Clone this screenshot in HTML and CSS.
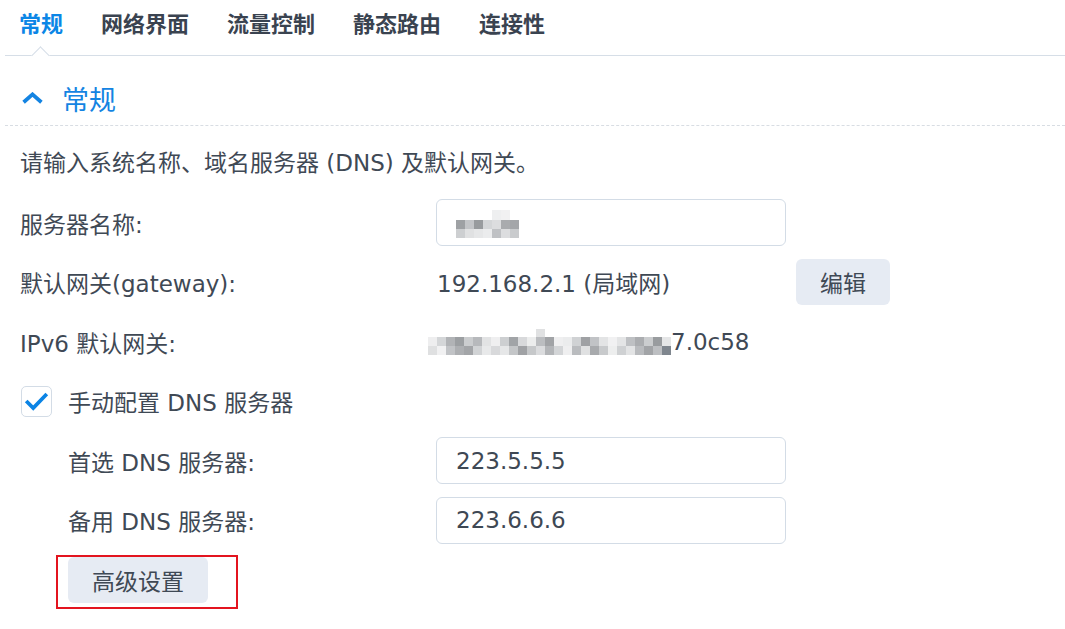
FILE: index.html
```html
<!DOCTYPE html>
<html lang="zh-CN">
<head>
<meta charset="utf-8">
<title>常规</title>
<link rel="stylesheet" href="styles.css">
</head>
<body>
<div class="page">
  <nav class="tabs">
    <span class="tab active">常规</span>
    <span class="tab">网络界面</span>
    <span class="tab">流量控制</span>
    <span class="tab">静态路由</span>
    <span class="tab">连接性</span>
  </nav>

  <section class="panel">
    <div class="section-head">
      <svg class="chevron" width="21" height="12" viewBox="0 0 21 12"><polyline points="1.6,10.2 10.5,2.4 19.4,10.2" fill="none" stroke="#1484e2" stroke-width="3.8"/></svg>
      <span class="section-title">常规</span>
    </div>

    <div class="content">
      <p class="desc">请输入系统名称、域名服务器 (DNS) 及默认网关。</p>

      <div class="form">
        <div class="row">
          <span class="label">服务器名称:</span>
          <div class="field">
            <div class="input">
              <svg class="mosaic" width="76" height="28" viewBox="0 0 76 28">
                <rect x="36" y="0" width="9" height="10" fill="#eeeff0"/>
                <rect x="45" y="0" width="9" height="10" fill="#f1f1f2"/>
                <rect x="0" y="10" width="9" height="9" fill="#9ea1a4"/>
                <rect x="9" y="10" width="9" height="9" fill="#c3c5c8"/>
                <rect x="18" y="10" width="9" height="9" fill="#989b9e"/>
                <rect x="27" y="10" width="9" height="9" fill="#d4d6d8"/>
                <rect x="36" y="10" width="9" height="9" fill="#dcdddf"/>
                <rect x="45" y="10" width="9" height="9" fill="#a9abae"/>
                <rect x="54" y="10" width="9" height="9" fill="#a4a6a9"/>
                <rect x="0" y="19" width="9" height="9" fill="#cdcfd1"/>
                <rect x="9" y="19" width="9" height="9" fill="#e0e1e2"/>
                <rect x="18" y="19" width="9" height="9" fill="#e6e7e8"/>
                <rect x="27" y="19" width="9" height="9" fill="#ebeced"/>
                <rect x="36" y="19" width="9" height="9" fill="#bfc1c4"/>
                <rect x="45" y="19" width="9" height="9" fill="#dcdddf"/>
                <rect x="54" y="19" width="9" height="9" fill="#c9cbcd"/>
              </svg>
            </div>
          </div>
        </div>

        <div class="row">
          <span class="label">默认网关(gateway):</span>
          <div class="field">
            <span class="value">192.168.2.1 (局域网)</span>
            <button class="btn">编辑</button>
          </div>
        </div>

        <div class="row">
          <span class="label">IPv6 默认网关:</span>
          <div class="field ipv6">
            <svg class="mosaic-wide" width="252" height="28" viewBox="0 0 252 28">
              <rect x="108" y="0" width="9" height="8" fill="#e0e1e2"/>
              <rect x="0" y="8" width="9" height="9" fill="#eeeeef"/>
              <rect x="9" y="8" width="9" height="9" fill="#d4d6d8"/>
              <rect x="18" y="8" width="9" height="9" fill="#b1b3b6"/>
              <rect x="27" y="8" width="9" height="9" fill="#9c9fa2"/>
              <rect x="36" y="8" width="9" height="9" fill="#cbcdcf"/>
              <rect x="45" y="8" width="9" height="9" fill="#b7b9bc"/>
              <rect x="54" y="8" width="9" height="9" fill="#e2e3e4"/>
              <rect x="63" y="8" width="9" height="9" fill="#efeff0"/>
              <rect x="72" y="8" width="9" height="9" fill="#cdcfd1"/>
              <rect x="81" y="8" width="9" height="9" fill="#a1a4a7"/>
              <rect x="90" y="8" width="9" height="9" fill="#d8d9db"/>
              <rect x="99" y="8" width="9" height="9" fill="#eceded"/>
              <rect x="108" y="8" width="9" height="9" fill="#bbbdc0"/>
              <rect x="117" y="8" width="9" height="9" fill="#a1a3a6"/>
              <rect x="126" y="8" width="9" height="9" fill="#efeff0"/>
              <rect x="135" y="8" width="9" height="9" fill="#ebeced"/>
              <rect x="144" y="8" width="9" height="9" fill="#d0d2d4"/>
              <rect x="153" y="8" width="9" height="9" fill="#9fa1a4"/>
              <rect x="162" y="8" width="9" height="9" fill="#c1c3c6"/>
              <rect x="171" y="8" width="9" height="9" fill="#e3e4e5"/>
              <rect x="180" y="8" width="9" height="9" fill="#f1f1f2"/>
              <rect x="189" y="8" width="9" height="9" fill="#e4e5e6"/>
              <rect x="198" y="8" width="9" height="9" fill="#bec0c3"/>
              <rect x="207" y="8" width="9" height="9" fill="#abadb0"/>
              <rect x="216" y="8" width="9" height="9" fill="#cbcdcf"/>
              <rect x="225" y="8" width="9" height="9" fill="#999c9f"/>
              <rect x="234" y="8" width="9" height="9" fill="#e5e6e7"/>
              <rect x="0" y="17" width="9" height="9" fill="#dfe0e1"/>
              <rect x="9" y="17" width="9" height="9" fill="#f1f1f2"/>
              <rect x="18" y="17" width="9" height="9" fill="#c1c3c6"/>
              <rect x="27" y="17" width="9" height="9" fill="#adafb2"/>
              <rect x="36" y="17" width="9" height="9" fill="#a3a5a8"/>
              <rect x="45" y="17" width="9" height="9" fill="#d1d3d5"/>
              <rect x="54" y="17" width="9" height="9" fill="#e8e9ea"/>
              <rect x="63" y="17" width="9" height="9" fill="#d8d9db"/>
              <rect x="72" y="17" width="9" height="9" fill="#e6e7e8"/>
              <rect x="81" y="17" width="9" height="9" fill="#c4c6c8"/>
              <rect x="90" y="17" width="9" height="9" fill="#a0a2a5"/>
              <rect x="99" y="17" width="9" height="9" fill="#c6c8ca"/>
              <rect x="108" y="17" width="9" height="9" fill="#dbdcde"/>
              <rect x="117" y="17" width="9" height="9" fill="#b3b5b8"/>
              <rect x="126" y="17" width="9" height="9" fill="#d3d5d7"/>
              <rect x="135" y="17" width="9" height="9" fill="#efeff0"/>
              <rect x="144" y="17" width="9" height="9" fill="#babcbf"/>
              <rect x="153" y="17" width="9" height="9" fill="#e0e1e2"/>
              <rect x="162" y="17" width="9" height="9" fill="#a8aaad"/>
              <rect x="171" y="17" width="9" height="9" fill="#c8cacc"/>
              <rect x="180" y="17" width="9" height="9" fill="#edeeee"/>
              <rect x="189" y="17" width="9" height="9" fill="#cfd1d3"/>
              <rect x="198" y="17" width="9" height="9" fill="#e3e4e5"/>
              <rect x="207" y="17" width="9" height="9" fill="#b9bbbe"/>
              <rect x="216" y="17" width="9" height="9" fill="#a2a4a7"/>
              <rect x="225" y="17" width="9" height="9" fill="#bdbfc2"/>
              <rect x="234" y="17" width="9" height="9" fill="#7f868e"/>
            </svg><span class="value tail">7.0c58</span>
          </div>
        </div>

        <div class="row">
          <label class="check-label">
            <span class="checkbox">
              <svg width="31" height="31" viewBox="0 0 31 31"><polyline points="4.5,15 12,22.5 26.5,7.5" fill="none" stroke="#0b84e5" stroke-width="4"/></svg>
            </span>
            <span>手动配置 DNS 服务器</span>
          </label>
        </div>

        <div class="row">
          <span class="label sub">首选 DNS 服务器:</span>
          <div class="field">
            <div class="input">223.5.5.5</div>
          </div>
        </div>

        <div class="row">
          <span class="label sub">备用 DNS 服务器:</span>
          <div class="field">
            <div class="input">223.6.6.6</div>
          </div>
        </div>

        <div class="row">
          <div class="highlight">
            <button class="btn">高级设置</button>
          </div>
        </div>
      </div>
    </div>
  </section>
</div>
</body>
</html>
```

FILE: styles.css
```css
html, body {
  margin: 0;
  padding: 0;
  background: #ffffff;
}

body {
  font-family: "DejaVu Sans", "Noto Sans CJK SC", sans-serif;
  font-size: 23px;
  color: #3f4955;
  overflow: hidden;
}

.page {
  margin-left: 5px;
  width: 1060px;
}

/* Tabs */
.tabs {
  display: flex;
  gap: 38px;
  padding-left: 14px;
  height: 55px;
  border-bottom: 1px solid #d6dee7;
  box-sizing: content-box;
}

.tab {
  position: relative;
  font-family: "Noto Sans CJK SC", sans-serif;
  font-weight: 700;
  font-size: 22px;
  line-height: 44px;
  color: #3a4350;
}

.tab.active {
  color: #0b86e6;
}

.tab.active::after {
  content: "";
  position: absolute;
  left: 50%;
  bottom: -7px;
  width: 12px;
  height: 12px;
  margin-left: -7px;
  background: #ffffff;
  border-top: 1px solid #d6dee7;
  border-left: 1px solid #d6dee7;
  transform: rotate(45deg);
}

/* Section header */
.section-head {
  display: flex;
  align-items: center;
  gap: 19px;
  padding-left: 17px;
  padding-top: 17px;
  height: 52px;
  border-bottom: 1px dashed #d8dde3;
}

.chevron {
  display: block;
  margin-top: -2px;
}

.section-title {
  font-family: "Noto Sans CJK SC", sans-serif;
  font-size: 27px;
  line-height: 52px;
  color: #1484e2;
}

/* Content */
.content {
  padding-left: 15px;
}

.desc {
  margin: 0;
  padding-top: 20px;
  line-height: 34px;
}

.form {
  margin-top: 13px;
  display: flex;
  flex-direction: column;
}

.row {
  height: 59.5px;
  display: flex;
  align-items: center;
}

.label {
  width: 416px;
  flex: none;
}

.label.sub {
  padding-left: 48px;
  box-sizing: border-box;
}

.field {
  display: flex;
  align-items: center;
}

.input {
  width: 350px;
  height: 47px;
  box-sizing: border-box;
  border: 1px solid #d3dce6;
  border-radius: 6px;
  padding: 0 19px;
  display: flex;
  align-items: center;
  color: #3e4854;
}

.mosaic {
  display: block;
  margin-top: 2px;
}

.value {
  width: 350px;
  padding-left: 1px;
  box-sizing: border-box;
  white-space: nowrap;
}

.ipv6 {
  margin-left: -8px;
}

.mosaic-wide {
  display: block;
  margin-top: 2px;
}

.value.tail {
  width: auto;
  padding-left: 0;
  margin-left: -9px;
}

.btn {
  font-family: "Noto Sans CJK SC", sans-serif;
  font-size: 23px;
  color: #3f4955;
  background: #e6ebf3;
  border: none;
  border-radius: 6px;
  height: 46px;
  padding: 0 24px;
  margin-left: 10px;
  cursor: pointer;
}

.check-label {
  display: flex;
  align-items: center;
  gap: 16px;
  padding-left: 1px;
}

.checkbox {
  width: 31px;
  height: 31px;
  box-sizing: border-box;
  border: 1.5px solid #d3dce6;
  border-radius: 5px;
  display: flex;
  align-items: center;
  justify-content: center;
}

.checkbox svg {
  display: block;
}

.highlight {
  margin-left: 36px;
  margin-top: 4px;
  border: 2px solid #e3141f;
  padding: 0 28px 4px 10px;
}

.highlight .btn {
  margin-left: 0;
  display: block;
}
```
